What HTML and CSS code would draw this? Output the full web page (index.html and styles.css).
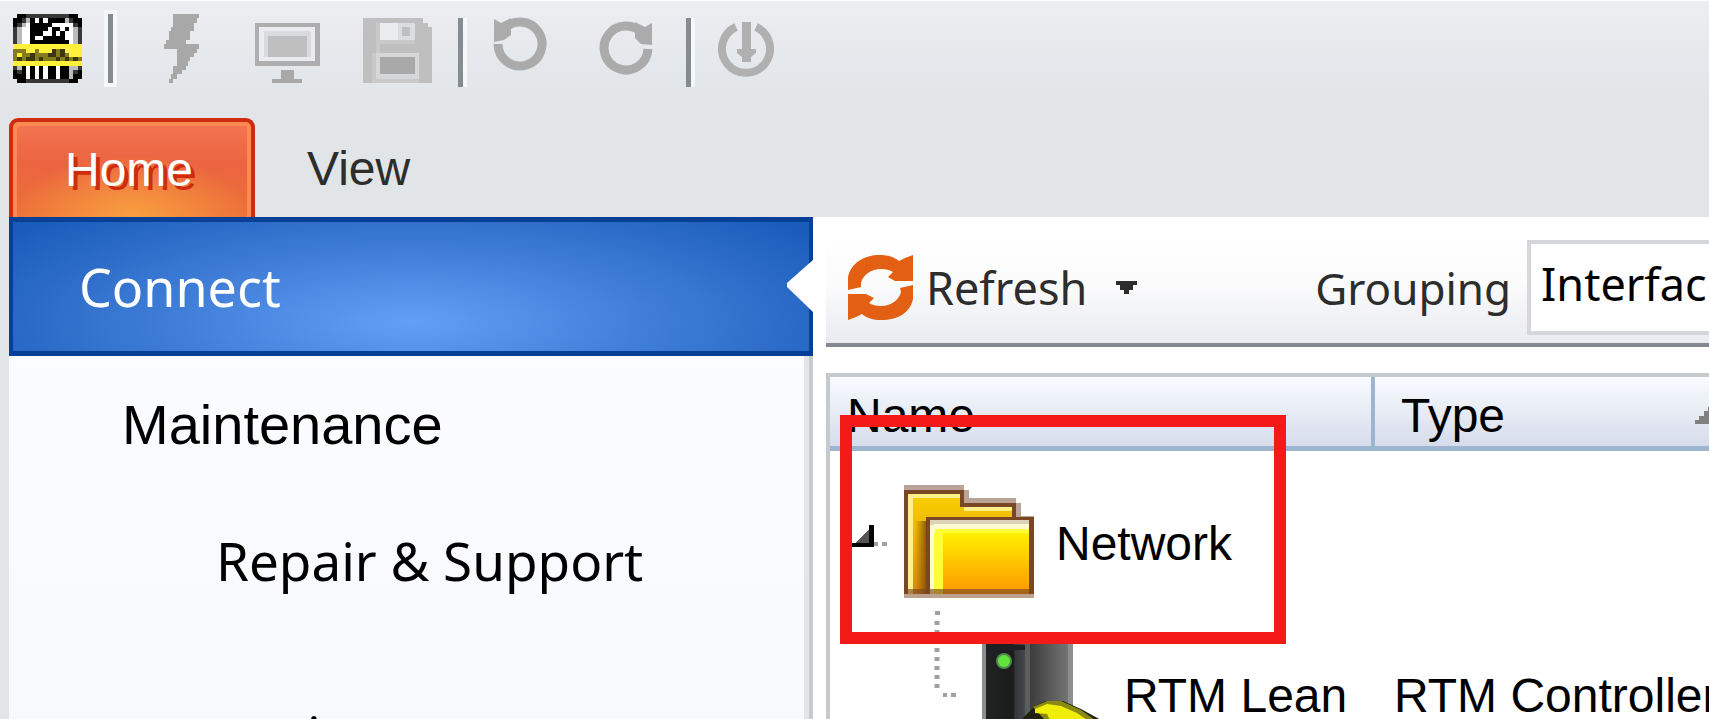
FILE: index.html
```html
<!DOCTYPE html>
<html lang="en">
<head>
    <meta charset="UTF-8">
    <meta name="viewport" content="width=device-width, initial-scale=1.0">
    <title>Setup Tool</title>
    <link rel="stylesheet" href="styles.css">
</head>
<body>

<header class="quick-bar">
    <svg class="icon" viewBox="0 0 16 16" shape-rendering="crispEdges">
        <path fill="#383838" d="M1 0h14v1h1v14h-1v1H1v-1H0V1h1z"/>
        <path fill="#bbb" d="M1 3h1V2h1V1h10v1h1v1h1v4H1zM1 12h14v1h-1v2H2v-2H1z"/>
        <path fill="#fff" d="M2 3h1V2h1V1h8v1h2v5H2zM3 12h10v3H3z"/>
        <path fill="#000" d="M4 1h1v1h1V1h1v1h1V1h3v1h-2v1H8v1H7v1H5v1h1v1H4zM7 5h2V3h1v2h1V4h1v2h1v1H6V6h1zM11 1h1v1h-1zM10 3h1v1h-1zM12 3h1v1h-1z"/>
        <path fill="#000" d="M1 0h2v1H2v1H1v1H0V1h1zM13 0h2v1h1v2h-1V2h-1V1h-1zM0 13h1v1h1v1h1v1H1v-1H0zM15 13h1v2h-1v1h-2v-1h1v-1h1zM2 12h1v3H2zM4 12h1v3H4zM6 12h1v3H6zM8 12h2v3H8zM11 12h2v3h-2z"/>
        <path fill="#fff13a" d="M0 7h16v5H0z"/>
        <path fill="#847c1c" d="M0 8h3v1h2V8h1v1h3V8h3v1h1v1h3v1H0z"/>
        <path fill="#3b360c" d="M1 10h1v1H1zM3 10h2v1H3zM4 9h1v1H4zM6 10h1v1H6zM8 9h1v1H8zM9 8h1v2H9zM10 10h1v1h-1zM11 8h1v2h-1zM12 10h1v1h-1zM14 10h1v1h-1z"/>
        <path fill="#fff13a" d="M1 9h1v1H1z"/>
    </svg>
    <span class="sep sep-wide"></span>
    <div class="quick-group">
        <button class="quick-btn" aria-label="Connect">
            <svg class="icon" viewBox="-4 0 16 16" shape-rendering="crispEdges" fill="none" stroke="#a8a8a8">
                <path d="M2 .5h6M2 1.5h5.5M2 2.5h5M1.5 3.5H7M1 4.5h5M1 5.5h5M.5 6.5H5M0 7.5h8M3 8.5h4.500M3 9.500h4M3 10.500h3M3 11.500h2.500M2 12.500h3M2 13.500h2M1.500 14.500H3M1 15.500h1"/>
            </svg>
        </button>
        <button class="quick-btn" aria-label="Device">
            <svg class="icon" viewBox="0 0 16 16" shape-rendering="crispEdges">
                <path fill="#aeaeae" d="M0 2h15v10H0z"/>
                <path fill="#ebecf0" d="M1 3h13v8H1z"/>
                <path fill="#dadbdd" d="M2 4h11v6H2z"/>
                <path fill="#bfbfbf" d="M3 5h9v5H3z"/>
                <path fill="#a8a8a8" d="M6 13h3v2h2v1H4v-1h2z"/>
            </svg>
        </button>
        <button class="quick-btn" aria-label="Save">
            <svg class="icon" viewBox="0 0 16 16" shape-rendering="crispEdges">
                <path fill="#bfbfbf" d="M0 1h14v1h1v1h1v13H0z"/>
                <path fill="#c9c9c9" d="M2 9h1V2h1v4h8v1H4v2h9v7H2z"/>
                <path fill="#ebecf0" d="M4 2h8v4H4z"/>
                <path fill="#dcdddf" d="M8 2h4v4H8z"/>
                <path fill="#bfbfbf" d="M9 3h2v2H9z"/>
                <path fill="#d6d7d8" d="M3 9h10v6H3z"/>
                <path fill="#a9a9a9" d="M4 10h8v4H4z"/>
            </svg>
        </button>
    </div>
    <span class="sep"></span>
    <div class="quick-group">
        <button class="quick-btn" aria-label="Undo">
            <svg class="icon" viewBox="0 0 69 69">
                <path fill="none" stroke="#ababab" stroke-width="9" d="M15 30A22 22 0 1 0 20 16"/>
                <path fill="#ababab" d="M11 5l7 4 10-5v17l-7 5-10 2z"/>
            </svg>
        </button>
        <button class="quick-btn" aria-label="Redo">
            <svg class="icon" viewBox="0 0 69 69">
                <path fill="none" stroke="#ababab" stroke-width="9" d="M57 35A22 22 0 1 1 52 20"/>
                <path fill="#ababab" d="M61 9l-7 4-10-5v16l6 6 11 1z"/>
            </svg>
        </button>
    </div>
    <span class="sep"></span>
    <button class="quick-btn" aria-label="Power">
        <svg class="icon" viewBox="0 0 69 69">
            <path fill="none" stroke="#b0b0b0" stroke-width="8" d="M25 13A24 24 0 1 0 45 13"/>
            <path fill="#b0b0b0" d="M31 8h9v27h5v4l-5 4v5h-9v-5l-5-4v-4h5z"/>
        </svg>
    </button>
</header>

<nav class="tabs">
    <a class="tab tab-active" href="#">Home</a>
    <a class="tab" href="#">View</a>
</nav>

<div class="content">
    <nav class="side">
        <a class="side-item side-active" href="#">Connect
            <svg class="notch" viewBox="0 0 26 52"><path fill="#fff" d="M26 0v52L0 27v-4z"/></svg>
        </a>
        <a class="side-item side-sub" href="#">Maintenance</a>
        <a class="side-item side-deep" href="#">Repair &amp; Support</a>
        <a class="side-item side-last" href="#">i</a>
    </nav>

    <main class="main">
        <div class="actions">
            <button class="refresh">
                <svg class="refresh-icon" viewBox="0 0 66 66">
                    <g fill="#e35f14">
                        <path d="M0 35V22C3 8 16 0 32 0c8 0 14 2 19 6l6-3 8-3v26H47l-7-4 5-5c-3-2-7-3-12-3-10 0-18 6-20 14v4z"/>
                        <path d="M65 30v14C62 58 50 65 33 65c-8 0-14-2-19-6l-6 3-8 3V39h18l8 4-5 5c3 2 7 3 12 3 10 0 18-6 20-14l-1-4z"/>
                    </g>
                </svg>
                <span>Refresh</span>
                <svg class="drop" viewBox="0 0 5 3" shape-rendering="crispEdges"><path fill="#2d2d2d" d="M0 0h5v1H4v1H3v1H2V2H1V1H0z"/></svg>
            </button>
            <label class="grouping" for="grouping">Grouping</label>
            <select class="group-select" id="grouping">
                <option>Interface</option>
            </select>
        </div>

        <table class="devices">
            <thead>
                <tr>
                    <th class="col-name">Name</th>
                    <th class="col-type">
                        <div class="sorted">Type
                            <svg class="sort" viewBox="0 0 7 4" shape-rendering="crispEdges"><path fill="#808080" d="M0 4V3h1V2h1V1h1V0h1v1h1v1h1v1h1v1z"/></svg>
                        </div>
                    </th>
                </tr>
            </thead>
            <tbody>
                <tr>
                    <td>
                        <div class="node">
                            <svg class="tree" width="226" height="152" viewBox="0 0 226 152" shape-rendering="crispEdges">
                                <defs>
                                    <linearGradient id="back" x1="0" y1="0" x2="0" y2="1"><stop offset="0" stop-color="#fad000"/><stop offset="1" stop-color="#d98a10"/></linearGradient>
                                    <linearGradient id="front" x1="0" y1="0" x2="0" y2="1"><stop offset="0" stop-color="#fff000"/><stop offset="1" stop-color="#ff9600"/></linearGradient>
                                    <linearGradient id="shade" x1="0" y1="0" x2="1" y2="0"><stop offset="0" stop-color="#8b5600" stop-opacity="0"/><stop offset="1" stop-color="#7d4c00"/></linearGradient>
                                </defs>
                                <path fill="#555" d="M22 79l22-22v22z"/>
                                <path fill="#050505" d="M18 76h21V58h5v22H18z"/>
                                <path fill="#a0a0a0" d="M44 75h4v4h-4zM52 75h5v4h-5z"/>
                                <path fill="#baa498" d="M74 18h60v5h5v8h47v5h5v13h13v82H74z"/>
                                <path fill="#7a4724" d="M74 23h60v13h52v14h18v77H74z"/>
                                <path fill="url(#back)" d="M78 27h52v13h52v10H98v77H78z"/>
                                <path fill="#fff08a" d="M78 27h52v4H83v96h-5zM134 40h48v4h-48z"/>
                                <path fill="url(#shade)" d="M85 54h13v73H85z"/>
                                <path fill="#7a4724" d="M96 50h108v4h-104v73h-4z"/>
                                <path fill="#ddd3b9" d="M100 53h99v5h-99z"/>
                                <path fill="#fffbd0" d="M104 57h95v5h-95zM100 58h5v69h-5z"/>
                                <path fill="#ffff38" d="M105 62h94v4h-94zM104 66h9v61h-9z"/>
                                <path fill="url(#front)" d="M113 66h86v61h-86z"/>
                                <path fill="#7a4724" fill-opacity=".65" d="M74 122h130v5H74z"/>
                                <path fill="#bba28f" d="M74 127h130v4H74z"/>
                                <path fill="none" stroke="#a0a0a0" stroke-width="5" stroke-dasharray="4 5" d="M107 144v8"/>
                            </svg>
                            <span>Network</span>
                        </div>
                    </td>
                    <td></td>
                </tr>
                <tr>
                    <td>
                        <div class="node">
                            <svg class="tree" width="294" height="152" viewBox="0 0 294 152">
                                <defs>
                                    <linearGradient id="face"><stop offset="0" stop-color="#202224"/><stop offset=".7" stop-color="#1b1b1b"/><stop offset=".75" stop-color="#34373a"/><stop offset="1" stop-color="#45484b"/></linearGradient>
                                    <linearGradient id="side"><stop offset="0" stop-color="#3c3c3c"/><stop offset="1" stop-color="#747474"/></linearGradient>
                                </defs>
                                <path fill="none" stroke="#a0a0a0" stroke-width="5" stroke-dasharray="4 5" d="M107 2v72"/>
                                <path fill="#a0a0a0" d="M113 74h4v4h-4zM121 74h5v4h-5z"/>
                                <path fill="#8c8f90" d="M152 18h91v124h-91z"/>
                                <path fill="url(#face)" d="M156 18h39v124h-39z"/>
                                <path fill="#1c1f23" d="M156 26h39v5h-39z"/>
                                <path fill="#5c5d5f" d="M195 18h5v124h-5z"/>
                                <path fill="url(#side)" d="M200 18h38v124h-38z"/>
                                <circle cx="174" cy="42" r="8" fill="#4f8a4e"/>
                                <circle cx="174" cy="42" r="6" fill="#62e33c"/>
                                <path fill="#20200c" d="M191 101l14-14 10-5h18l18 8 20 11z"/>
                                <path fill="#898a12" d="M203 88l14-6h14l20 9 14 10h-50z"/>
                                <path fill="#f0ed08" d="M205 90l12-5 14 2 16 7 10 7h-37l-3-6-12-1z"/>
                            </svg>
                            <span>RTM Lean</span>
                        </div>
                    </td>
                    <td class="type">RTM Controller</td>
                </tr>
            </tbody>
        </table>
        <div class="highlight"></div>
    </main>
</div>

</body>
</html>
```
FILE: styles.css
```css
*{
    padding: 0;
    margin: 0;
    box-sizing: border-box;
}

body{
    font-family: "Liberation Sans", Arial, sans-serif;
    font-size: 48px;
    color: #000;
    background-color: #e1e5e8;
    height: 100vh;
    overflow: hidden;
    display: flex;
    flex-direction: column;
}

a{
    color: inherit;
    text-decoration: none;
}

button{
    background: none;
    border: none;
    font: inherit;
    color: inherit;
}

svg{
    display: block;
    flex-shrink: 0;
}

/* quick access bar */
.quick-bar{
    flex: 0 0 118px;
    display: flex;
    align-items: flex-start;
    padding: 13px;
    border-top: 1px solid #fff;
    background: linear-gradient(#ecedf1, #e1e5e8 100px);
}

.icon{
    width: 69px;
    height: 69px;
}

.quick-group{
    display: flex;
    gap: 39px;
}

.sep{
    width: 9px;
    height: 69px;
    margin: 4px 16px 0 26px;
    background-color: #848c92;
    border-right: 4px solid #f6f7f9;
}

.sep-wide{
    width: 13px;
    height: 77px;
    margin: -4px 30px 0 22px;
    border: 4px solid #f6f7f9;
}

/* ribbon tabs */
.tabs{
    flex: 0 0 99px;
    min-height: 0;
    display: flex;
    padding-left: 9px;
    color: #2d2d2d;
}

.tab{
    padding: 0 52px;
    line-height: 102px;
}

.tab-active{
    width: 246px;
    color: #fff;
    line-height: 96px;
    text-shadow: 4px 4px #cf2b10;
    border: 4px solid #cf2b10;
    border-bottom: none;
    border-radius: 9px 9px 0 0;
    box-shadow: inset 4px 4px #fa8a50, inset -4px 0 #fa8a50;
    background: radial-gradient(ellipse 120px 62px at 50% 100%, #f9a040, rgba(240, 120, 56, 0)), linear-gradient(#f47452, #eb6440 45%, #ec7138);
}

/* left pane and work area */
.content{
    flex: 1;
    min-height: 0;
    display: flex;
    padding-left: 9px;
}

.side{
    flex: 0 0 804px;
    overflow: hidden;
    background: linear-gradient(#c9cacc, #c9cacc) right / 4px 100% no-repeat, linear-gradient(#e4e5e7, #e4e5e7) right 4px top / 5px 100% no-repeat, linear-gradient(#fcfdff, #f8f9fc);
    font-family: "Noto Sans", sans-serif;
    font-size: 53px;
}

.side-item{
    display: flex;
    align-items: center;
    height: 136px;
}

.side-active{
    position: relative;
    height: 139px;
    padding-left: 66px;
    color: #fff;
    font-size: 52px;
    border: 4px solid #053f96;
    border-width: 5px 4px;
    background: radial-gradient(ellipse 500px 150px at 50% 78%, #62a0f8, #4583dc 40%, #1a5cba);
}

.notch{
    position: absolute;
    right: -4px;
    top: 38px;
    width: 26px;
    height: 52px;
}

.side-sub{
    padding-left: 113px;
    font-family: "Liberation Sans", Arial, sans-serif;
    font-size: 56px;
}

.side-deep{
    padding-left: 207px;
}

.side-last{
    margin-top: 38px;
    padding-left: 298px;
}

.main{
    flex: 1;
    min-width: 0;
    position: relative;
    background-color: #fff;
    padding: 19px 0 0 13px;
}

.actions{
    display: flex;
    align-items: center;
    height: 111px;
    padding: 0 0 4px 22px;
    border-bottom: 4px solid #848890;
    background: linear-gradient(#fff, #fbfbfc 45%, #e9ebf0);
    color: #2d2d2d;
    font-family: "Noto Sans", sans-serif;
    font-size: 45px;
}

.refresh{
    display: flex;
    align-items: center;
    gap: 12px;
}

.refresh-icon{
    width: 66px;
    height: 66px;
}

.drop{
    width: 21px;
    height: 13px;
    margin-left: 17px;
}

.grouping{
    margin-left: 178px;
    font-size: 44px;
}

.group-select{
    appearance: none;
    flex: 1;
    height: 95px;
    margin: 0 -80px 0 16px;
    padding: 0 0 8px 10px;
    font: inherit;
    color: #000;
    background-color: #fff;
    border: 4px solid #d5d6da;
    border-radius: 0;
}

/* device table, last column runs past the window */
.devices{
    width: calc(100% + 20px);
    margin-top: 26px;
    table-layout: fixed;
    border-collapse: separate;
    border-spacing: 0;
    border: 4px solid #c7cacd;
}

.devices th{
    height: 74px;
    padding: 7px 0 0 17px;
    text-align: left;
    font-weight: normal;
    border-bottom: 5px solid #9db5cf;
    background: linear-gradient(#f8fcff, #d6dcea);
}

.devices .col-name{
    width: 545px;
    border-right: 4px solid #9db5cf;
}

.devices .col-type{
    padding-left: 26px;
}

.sorted{
    display: flex;
    align-items: center;
    justify-content: space-between;
}

.sort{
    width: 30px;
    height: 17px;
}

.devices tbody::before{
    content: "";
    display: block;
    height: 16px;
}

.devices td{
    height: 152px;
    white-space: nowrap;
}

.devices .type{
    padding-left: 19px;
}

.node{
    display: flex;
    align-items: center;
}

/* red callout round the Network node */
.highlight{
    position: absolute;
    left: 27px;
    top: 198px;
    width: 446px;
    height: 229px;
    border: 12px solid #f31a17;
}
```
